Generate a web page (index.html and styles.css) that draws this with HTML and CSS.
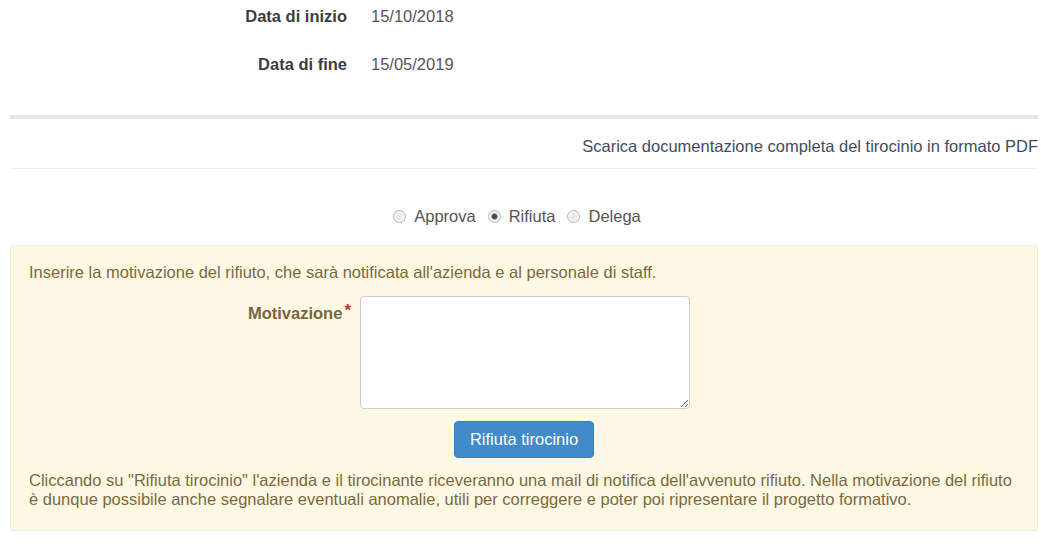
FILE: index.html
```html
<!DOCTYPE html>
<html lang="it">

<head>
    <meta charset="UTF-8">
    <title>Tirocinio</title>
    <link rel="stylesheet" href="styles.css">
</head>

<body>
    <div class="page">
        <div class="info-row">
            <div class="info-label">Data di inizio</div>
            <div class="info-value">15/10/2018</div>
        </div>
        <div class="info-row">
            <div class="info-label">Data di fine</div>
            <div class="info-value">15/05/2019</div>
        </div>

        <hr class="sep-thick">
        <div class="download">
            <a href="#">Scarica documentazione completa del tirocinio in formato PDF</a>
        </div>
        <hr class="sep-thin">

        <div class="choices">
            <label><input type="radio" name="esito"> Approva</label>
            <label><input type="radio" name="esito" checked> Rifiuta</label>
            <label><input type="radio" name="esito"> Delega</label>
        </div>

        <div class="panel-warning">
            <p class="intro">Inserire la motivazione del rifiuto, che sarà notificata all'azienda e al personale di staff.</p>
            <div class="form-row">
                <label class="form-label" for="motivo">Motivazione<span class="req">*</span></label>
                <textarea id="motivo" class="form-text"></textarea>
            </div>
            <div class="actions">
                <button class="btn-primary">Rifiuta tirocinio</button>
            </div>
            <p class="note">Cliccando su "Rifiuta tirocinio" l'azienda e il tirocinante riceveranno una mail di notifica dell'avvenuto rifiuto. Nella motivazione del rifiuto è dunque possibile anche segnalare eventuali anomalie, utili per correggere e poter poi ripresentare il progetto formativo.</p>
        </div>
    </div>
</body>

</html>
```

FILE: styles.css
```css
body {
    margin: 0;
    font-family: "Liberation Sans", Arial, sans-serif;
    font-size: 16.5px;
    line-height: 20px;
    color: #333;
    background: #fff;
}

.page {
    padding: 0 3px 0 10px;
}

.info-row {
    display: flex;
    align-items: center;
    height: 32px;
    margin-bottom: 16px;
}

.info-label {
    width: 337px;
    text-align: right;
    font-weight: bold;
    color: #3d3d3d;
}

.info-value {
    margin-left: 24px;
    color: #555;
}

.sep-thick {
    margin: 35px 0 0;
    border: 0;
    border-top: 4px solid #e8e8e8;
}

.download {
    text-align: right;
    padding: 17px 0 12px;
}

.download a {
    color: #3e4d5e;
    text-decoration: none;
}

.sep-thin {
    margin: 0;
    border: 0;
    border-top: 1px solid #eee;
}

.choices {
    display: flex;
    justify-content: center;
    gap: 12px;
    padding: 37px 14px 19px 0;
    color: #555;
}

.choices label {
    display: flex;
    align-items: center;
    gap: 8px;
}

.choices input {
    appearance: none;
    -webkit-appearance: none;
    margin: 0;
    width: 13px;
    height: 13px;
    border: 1px solid #b5b5b5;
    border-radius: 50%;
    background: radial-gradient(circle, #e4e4e4 0, #f6f6f6 70%);
}

.choices input:checked {
    background: radial-gradient(circle, #3a3a3a 0, #555 2.5px, #f2f2f2 3.5px);
}

.panel-warning {
    background: #fcf8e3;
    border: 1px solid #f6ead0;
    border-radius: 4px;
    box-shadow: 0 1px 2px rgba(0, 0, 0, 0.04);
    color: #7d6841;
    padding: 16px 18px 21px;
}

.intro {
    margin: 0 0 14px;
}

.form-row {
    display: flex;
    align-items: flex-start;
}

.form-label {
    width: 331px;
    box-sizing: border-box;
    text-align: right;
    font-weight: bold;
    color: #7a6440;
    padding-top: 7px;
    padding-right: 9px;
}

.req {
    color: #c9302c;
    vertical-align: top;
    margin-left: 2px;
    font-size: 17px;
    line-height: 16px;
}

.form-text {
    width: 330px;
    height: 113px;
    box-sizing: border-box;
    border: 1px solid #ccc;
    border-radius: 4px;
    margin: 0;
    resize: vertical;
    background: #fff;
}

.actions {
    display: flex;
    padding: 12px 0 0 425px;
}

.btn-primary {
    background: #418bca;
    border: 1px solid #367fbe;
    border-radius: 4px;
    color: #fff;
    font-family: inherit;
    font-size: 16.5px;
    width: 140px;
    height: 37px;
}

.note {
    margin: 13px 0 0;
    line-height: 19px;
}
```
